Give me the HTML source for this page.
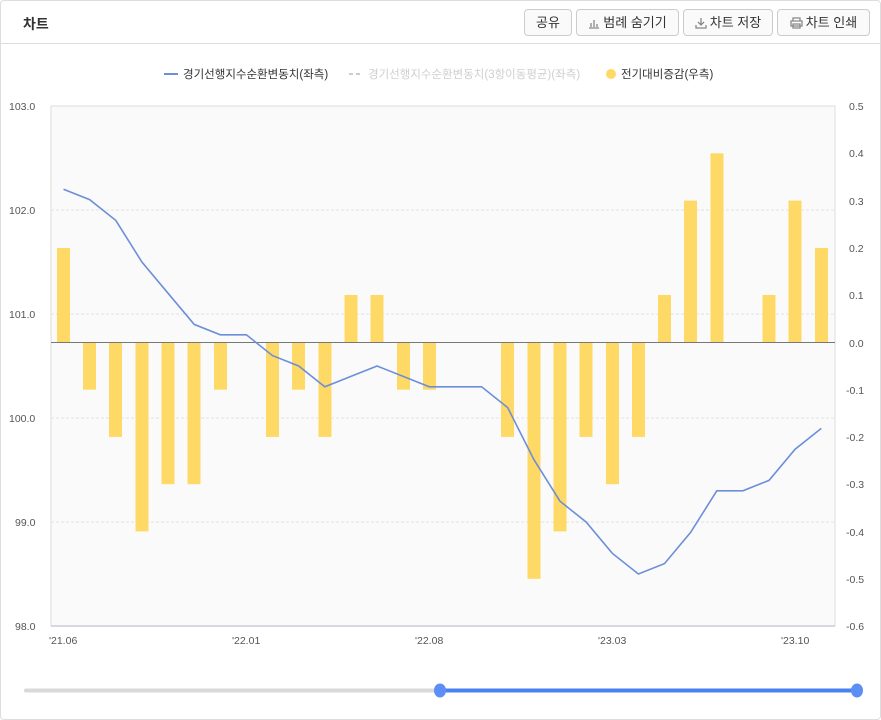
<!DOCTYPE html>
<html><head><meta charset="utf-8"><style>
*{box-sizing:border-box;margin:0;padding:0}
body{width:881px;height:720px;background:#fff;font-family:"Liberation Sans","Noto Sans CJK KR",sans-serif;overflow:hidden}
.wrap{position:absolute;left:0;top:0;width:881px;height:720px;border:1px solid #ddd;border-radius:4px}
.hdr{height:43px;border-bottom:1px solid #ddd;position:relative}
.hdr .t{position:absolute;left:22px;top:13px;font-size:14px;font-weight:bold;color:#333}
.btn{position:absolute;top:8px;height:27px;border:1px solid #ccc;border-radius:4px;background:#fafafa;font-size:13px;color:#333;line-height:25px;text-align:center}
.btn svg{vertical-align:-2px;margin-right:3px}
</style></head><body><div class="wrap">
<div class="hdr"><div class="t">차트</div>
<div class="btn" style="left:523px;width:48px">공유</div>
<div class="btn" style="left:575px;width:103px"><svg width="12" height="12"><path d="M1 11h10M3 10V6M6 10V3M9 10V7" stroke="#888" stroke-width="1.3" fill="none"/></svg>범례 숨기기</div>
<div class="btn" style="left:682px;width:90px"><svg width="12" height="12"><path d="M6 1v7M3 5l3 3 3-3M1 8v3h10V8" stroke="#888" stroke-width="1.3" fill="none"/></svg>차트 저장</div>
<div class="btn" style="left:776px;width:93px"><svg width="13" height="12"><path d="M3 4V1h7v3M1 4h11v5H1zM3 7h7v4H3z" stroke="#888" stroke-width="1.3" fill="#fff"/></svg>차트 인쇄</div>
</div>
<svg width="881" height="720" style="position:absolute;left:-1px;top:-1px" font-family="Liberation Sans,Noto Sans CJK KR,sans-serif">
<g font-size="11.5" fill="#333">
<line x1="164" y1="74" x2="178" y2="74" stroke="#6c8fd8" stroke-width="2"/>
<text x="183" y="78">경기선행지수순환변동치(좌측)</text>
<line x1="349" y1="74" x2="363" y2="74" stroke="#ccc" stroke-width="2" stroke-dasharray="4,3"/>
<text x="368" y="78" fill="#cfcfcf">경기선행지수순환변동치(3항이동평균)(좌측)</text>
<circle cx="611" cy="74" r="5" fill="#ffd966"/>
<text x="621" y="78">전기대비증감(우측)</text>
</g>
<rect x="51" y="106" width="784" height="520" fill="#fafafa" stroke="#e0dcd8"/>
<g stroke="#e2e2e2" stroke-dasharray="3,2"><line x1="51" x2="835" y1="210" y2="210"/><line x1="51" x2="835" y1="314" y2="314"/><line x1="51" x2="835" y1="418" y2="418"/><line x1="51" x2="835" y1="522" y2="522"/></g>
<line x1="51" x2="835" y1="626" y2="626" stroke="#d8d6df" stroke-width="2"/>
<g fill="#ffd966">
<rect x="57" y="248" width="13" height="94.5"/>
<rect x="83" y="342.4" width="13" height="47.3"/>
<rect x="109" y="342.4" width="13" height="94.5"/>
<rect x="135.5" y="342.4" width="13" height="189"/>
<rect x="161.5" y="342.4" width="13" height="141.8"/>
<rect x="187.5" y="342.4" width="13" height="141.8"/>
<rect x="214" y="342.4" width="13" height="47.3"/>
<rect x="266" y="342.4" width="13" height="94.5"/>
<rect x="292" y="342.4" width="13" height="47.3"/>
<rect x="318.5" y="342.4" width="13" height="94.5"/>
<rect x="344.5" y="295" width="13" height="47.3"/>
<rect x="370.5" y="295" width="13" height="47.3"/>
<rect x="397" y="342.4" width="13" height="47.3"/>
<rect x="423" y="342.4" width="13" height="47.3"/>
<rect x="501" y="342.4" width="13" height="94.5"/>
<rect x="527.5" y="342.4" width="13" height="236.4"/>
<rect x="553.5" y="342.4" width="13" height="189"/>
<rect x="579.5" y="342.4" width="13" height="94.5"/>
<rect x="606" y="342.4" width="13" height="141.8"/>
<rect x="632" y="342.4" width="13" height="94.5"/>
<rect x="658" y="295" width="13" height="47.3"/>
<rect x="684" y="200.6" width="13" height="141.8"/>
<rect x="710.5" y="153.3" width="13" height="189"/>
<rect x="762.5" y="295" width="13" height="47.3"/>
<rect x="788.5" y="200.6" width="13" height="141.8"/>
<rect x="815" y="248" width="13" height="94.5"/>
</g>
<line x1="51" x2="835" y1="342.5" y2="342.5" stroke="#777"/>
<polyline fill="none" stroke="#6c8fd8" stroke-width="1.6" points="63.5,189.2 89.6,199.6 115.8,220.4 141.9,262 168,293.2 194.2,324.4 220.3,334.8 246.4,334.8 272.5,355.6 298.7,366 324.8,386.8 350.9,376.4 377.1,366 403.2,376.4 429.3,386.8 455.5,386.8 481.6,386.8 507.7,407.6 533.9,459.6 560,501.2 586.1,522 612.2,553.2 638.4,574 664.5,563.6 690.6,532.4 716.8,490.8 742.9,490.8 769,480.4 795.1,449.2 821.3,428.4"/>
<g font-size="10.5" fill="#555">
<text x="9" y="110">103.0</text><text x="9" y="214">102.0</text><text x="9" y="318">101.0</text><text x="9" y="422">100.0</text><text x="15" y="526">99.0</text><text x="15" y="630">98.0</text>
<text x="849" y="110">0.5</text><text x="849" y="157">0.4</text><text x="849" y="205">0.3</text><text x="849" y="252">0.2</text><text x="849" y="299">0.1</text><text x="849" y="347">0.0</text><text x="846" y="394">-0.1</text><text x="846" y="441">-0.2</text><text x="846" y="488">-0.3</text><text x="846" y="536">-0.4</text><text x="846" y="583">-0.5</text><text x="846" y="630">-0.6</text>
<text x="49" y="644">'21.06</text><text x="232" y="644">'22.01</text><text x="415" y="644">'22.08</text><text x="598" y="644">'23.03</text><text x="781" y="644">'23.10</text>
</g>
<line x1="26" x2="440" y1="690.5" y2="690.5" stroke="#d9d9d9" stroke-width="4" stroke-linecap="round"/>
<line x1="440" x2="857" y1="690.5" y2="690.5" stroke="#4a80f0" stroke-width="4"/>
<ellipse cx="440" cy="690.5" rx="6" ry="7" fill="#5c8ef5"/>
<ellipse cx="857" cy="690.5" rx="6" ry="7" fill="#5c8ef5"/>
</svg>
</div></body></html>
